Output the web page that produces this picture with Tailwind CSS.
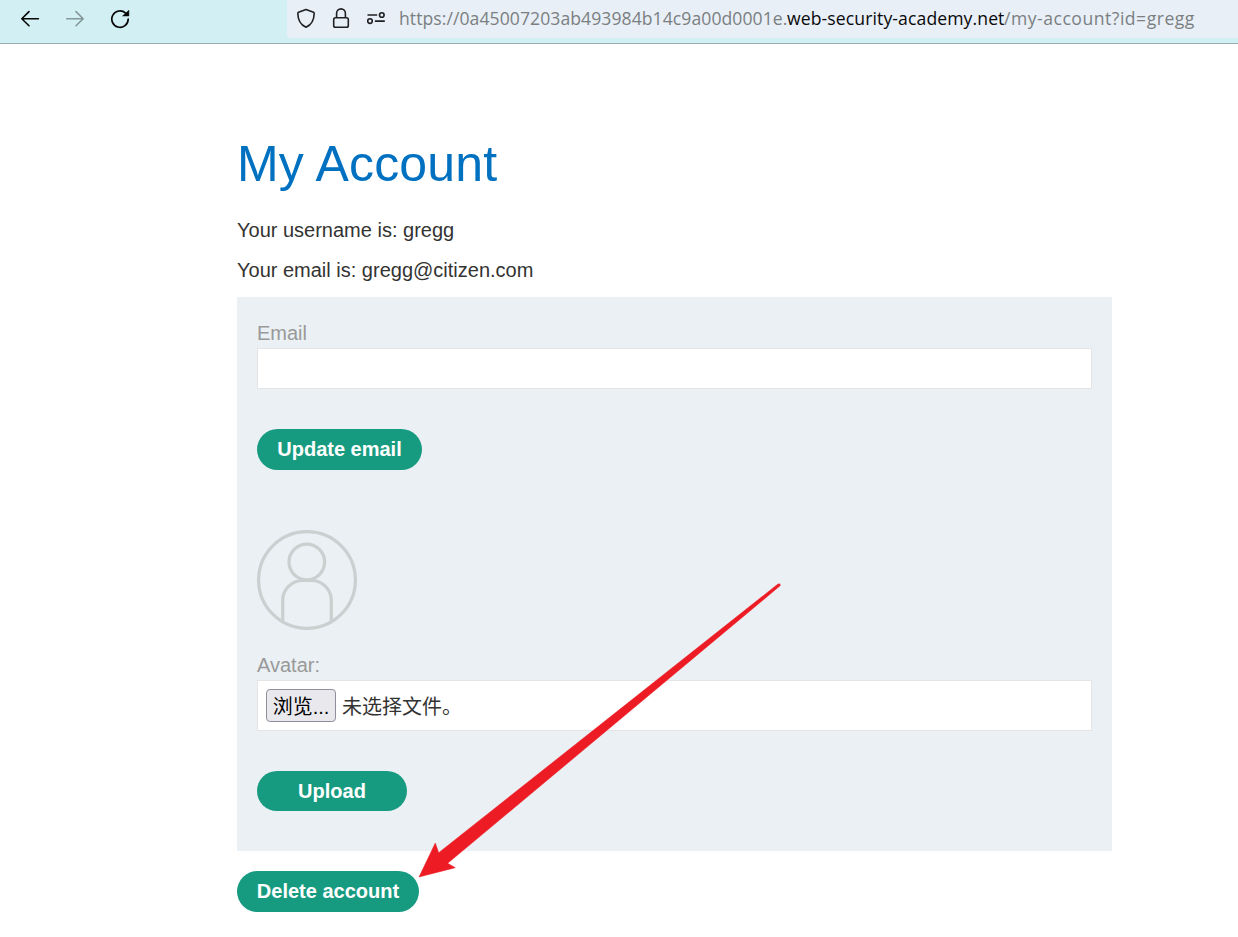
<!DOCTYPE html>
<html lang="zh-CN">
<head>
<meta charset="utf-8">
<title>My Account</title>
<script src="https://cdn.jsdelivr.net/npm/@tailwindcss/browser@4"></script>
</head>
<body class="relative w-[1238px] h-[937px] overflow-hidden bg-white font-['Liberation_Sans',Arial,sans-serif] text-[20px] leading-[23px] text-[#333332]">
<header class="flex h-11 items-start border-b border-[#97adb0] bg-[#d2eff3]">
  <nav class="flex h-[38px] w-[287px] shrink-0 items-center gap-[25px] pl-5">
    <svg class="size-5" viewBox="0 0 20 20" fill="none" stroke="#050505" stroke-width="1.6" stroke-linecap="round" stroke-linejoin="round"><path d="M18.4 9.7H1.8M9 2.6 1.8 9.7 9 16.8"/></svg>
    <svg class="size-5" viewBox="0 0 20 20" fill="none" stroke="#849799" stroke-width="1.6" stroke-linecap="round" stroke-linejoin="round"><path d="M1.8 9.7H18.2M11 2.6 18.2 9.7 11 16.8"/></svg>
    <svg class="size-5" viewBox="0 0 20 20"><path d="M15.6 4.1A8.2 8.2 0 1 0 18.2 10.2" fill="none" stroke="#050505" stroke-width="1.7" stroke-linecap="round"/><path d="M18.9 1.2V7H12.6Z" fill="#050505" stroke="#050505" stroke-width=".5" stroke-linejoin="round"/></svg>
  </nav>
  <div class="flex h-[38px] grow items-center rounded-bl-[4px] bg-[#e8eff6] pl-[9px]">
    <svg class="mr-[15px] h-[22px] w-5 shrink-0" viewBox="0 0 20 22" fill="none" stroke="#202124" stroke-width="1.6" stroke-linejoin="round"><path d="M10 1.4 17.5 4.2Q18.2 4.5 18.2 5.3C18.1 12.3 15.3 17 10 19.3 4.7 17 1.9 12.3 1.8 5.3Q1.8 4.5 2.5 4.2Z"/></svg>
    <svg class="mr-[15px] h-[22px] w-5 shrink-0" viewBox="0 0 20 22" fill="none" stroke="#202124" stroke-width="1.6"><rect x="2.7" y="9.7" width="14.6" height="9.5" rx="1.8"/><path d="M5.6 9.5V5.3a4.4 4.4 0 0 1 8.8 0V9.5"/></svg>
    <svg class="mr-[13px] h-[22px] w-5 shrink-0" viewBox="0 0 20 22" fill="none" stroke="#202124" stroke-width="1.6"><path d="M1.5 7H11.2M8.9 13.1H18.8"/><circle cx="15.8" cy="7" r="2.3"/><circle cx="4" cy="13.1" r="2.3"/></svg>
    <div class="flex whitespace-nowrap pb-0.5 font-['Open_Sans','Noto_Sans',sans-serif] text-[17.6px] leading-9 text-[#7b7f82]">
      <span class="w-[388px] shrink-0 tracking-[0.06px]">https://0a45007203ab493984b14c9a00d0001e.</span><span class="w-[217px] shrink-0 tracking-[0.1px] text-[#090909]">web-security-academy.net</span><span class="w-[191px] shrink-0 tracking-[0.5px]">/my-account?id=gregg</span>
    </div>
  </div>
</header>
<main class="ml-[237px] w-[875px] pt-[92px]">
  <h1 class="text-[50px] leading-[57px] tracking-[0.2px] text-[#0071c1]">My Account</h1>
  <p class="mt-[26px]">Your username is: gregg</p>
  <p class="mt-[17px]">Your email is: gregg@citizen.com</p>
  <section class="mt-[15px] flex h-[554px] flex-col items-start bg-[#eaf0f3] px-5 pt-[25px]">
    <label for="email" class="text-[#999]">Email</label>
    <input id="email" class="mt-[3px] h-[41px] w-full shrink-0 border border-[#e4e4e4] bg-white">
    <button class="mt-10 h-[41px] w-[165px] shrink-0 rounded-full bg-[#179b80] pb-px font-bold text-white">Update email</button>
    <svg class="mt-[60px] size-[100px] shrink-0" viewBox="0 0 100 100" fill="none" stroke="#cacfd0" stroke-width="3.2"><circle cx="50" cy="50" r="48.4"/><circle cx="49.8" cy="32" r="17.8"/><path d="M25.7 91.5V70A20 20 0 0 1 45.7 50.5H54.3A20 20 0 0 1 74.3 70V91.5"/></svg>
    <label class="mt-6 text-[#999]">Avatar:</label>
    <div class="mt-[3px] flex h-[51px] w-full shrink-0 items-center border border-[#e4e4e4] bg-white pl-2 font-['Liberation_Sans','Noto_Sans_CJK_SC',sans-serif]">
      <button class="h-[33px] w-[70px] shrink-0 rounded-[4px] border border-[#8f8f9d] bg-[#e9e9ed] pt-1 text-center leading-[27px] text-black">浏览...</button>
      <span class="ml-[6px] pt-1 leading-[31px]">未选择文件。</span>
    </div>
    <button class="mt-10 h-10 w-[150px] shrink-0 rounded-full bg-[#179b80] pt-px font-bold text-white">Upload</button>
  </section>
  <button class="mt-5 block h-[41px] w-[182px] rounded-full bg-[#179b80] pb-px font-bold text-white">Delete account</button>
</main>
<svg class="pointer-events-none absolute left-0 top-0 h-[937px] w-[1238px]" viewBox="0 0 1238 937"><path d="M419 877 435.3 843 438.7 852.7 778 584Q780.5 583 780.3 585.6L447.7 863.3 455.3 867.7Z" fill="#ed1c24" stroke="#ed1c24" stroke-width=".5"/></svg>
</body>
</html>
